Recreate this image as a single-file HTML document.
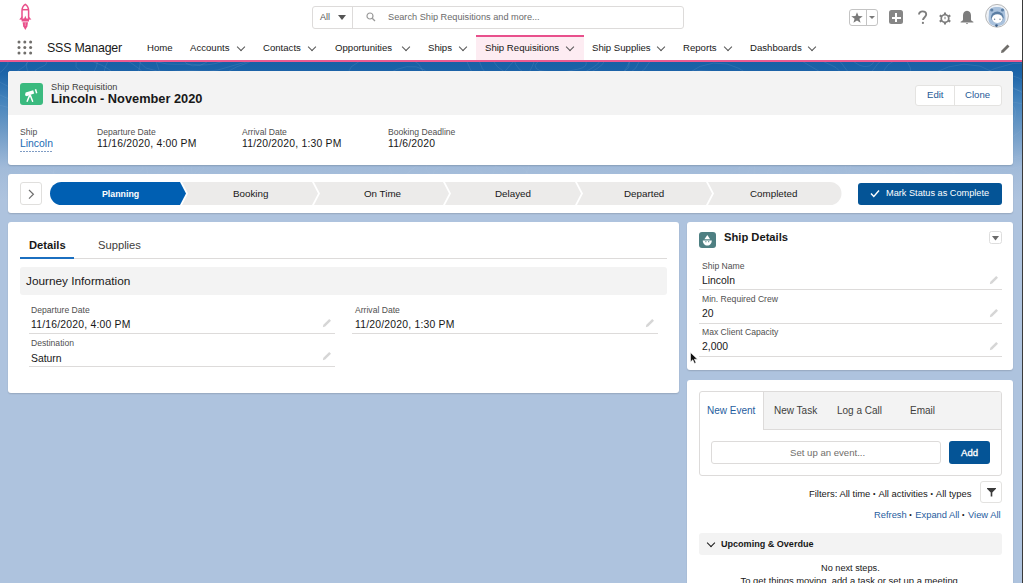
<!DOCTYPE html>
<html><head><meta charset="utf-8">
<style>
*{box-sizing:border-box;margin:0;padding:0}
html,body{width:1023px;height:583px;overflow:hidden}
body{font-family:"Liberation Sans",sans-serif;color:#181818;position:relative;
background:linear-gradient(to bottom,#ffffff 0,#ffffff 60px,#1960a5 62px,#1d64a8 74px,#4483bc 100px,#6d9ac6 130px,#a2bbd9 168px,#aec3de 200px,#aec3de 583px);}
.a{position:absolute;white-space:nowrap}
.card{position:absolute;background:#fff;border-radius:3px;box-shadow:0 1px 1.5px rgba(0,0,0,.14)}
.nav{font-size:9.6px;color:#181818;top:42px}
.chev{position:absolute;width:6px;height:6px;border-right:1px solid #555;border-bottom:1px solid #555;transform:rotate(45deg)}
.lbl{font-size:8.6px;color:#505050}
.val{font-size:10.4px;color:#181818}
.dt{letter-spacing:0.2px}
.uline{position:absolute;height:1px;background:#dddbda}
.pen{position:absolute;width:10px;height:10px}
</style></head><body>
<!-- header -->
<svg class="a" style="left:0;top:62px" width="1023" height="160" viewBox="0 62 1023 160"><defs><linearGradient id="fg" x1="0" y1="0" x2="0" y2="1"><stop offset="0" stop-color="#fff" stop-opacity="1"/><stop offset="1" stop-color="#fff" stop-opacity="0"/></linearGradient><mask id="fm"><rect x="0" y="62" width="1023" height="160" fill="url(#fg)"/></mask></defs><g mask="url(#fm)" fill="none" stroke="#ffffff" stroke-opacity="0.13" stroke-width="0.7"><path d="M79.7 70.0 L82.9 72.5 L84.7 75.5 L83.8 78.5 L80.3 80.5 L75.5 81.4 L70.8 81.5 L66.8 81.6 L63.4 81.8 L60.0 82.1 L56.5 82.1 L53.2 81.5 L49.9 80.7 L46.4 80.0 L42.2 79.2 L37.8 77.9 L34.4 75.7 L33.5 72.9 L35.5 70.0 L39.4 67.8 L43.2 66.2 L45.5 64.9 L46.5 63.0 L47.1 60.6 L48.7 58.0 L51.7 56.0 L55.7 55.1 L60.0 54.9 L64.2 55.3 L68.3 56.0 L72.0 57.2 L74.8 59.1 L76.1 61.7 L76.1 64.3 L76.0 66.4 L77.1 68.1 L79.7 70.0Z"/><path d="M94.9 70.0 L93.0 73.6 L90.7 76.9 L87.4 79.7 L83.0 81.9 L78.3 83.4 L74.1 85.0 L70.4 87.5 L66.0 90.9 L60.0 94.2 L52.7 95.6 L45.7 94.2 L40.9 90.4 L38.7 85.6 L37.9 81.4 L36.6 78.3 L33.7 75.9 L30.1 73.2 L27.3 70.0 L26.4 66.4 L27.1 62.6 L28.8 58.9 L31.2 55.1 L34.8 51.5 L40.3 49.0 L47.2 48.4 L54.3 49.9 L60.0 52.6 L64.4 54.6 L68.8 55.1 L74.7 54.4 L82.2 53.7 L89.7 54.7 L95.1 57.5 L97.2 61.7 L96.7 66.0 L94.9 70.0Z"/><path d="M110.0 70.0 L114.3 75.9 L112.7 81.8 L105.9 86.3 L96.8 89.0 L88.1 90.6 L80.8 92.1 L74.0 93.7 L67.1 94.9 L60.0 95.0 L53.0 94.4 L45.9 93.8 L37.8 93.6 L28.2 93.3 L18.3 91.5 L11.0 87.4 L8.9 81.4 L12.5 75.2 L19.0 70.0 L24.7 66.2 L27.2 62.6 L27.1 58.3 L27.1 53.0 L29.6 47.7 L35.3 43.6 L42.9 41.1 L51.3 39.7 L60.0 39.0 L68.8 39.3 L77.1 41.2 L83.3 45.1 L86.7 50.4 L88.0 55.5 L89.8 59.4 L94.4 62.3 L102.1 65.4 L110.0 70.0Z"/><path d="M104.4 70.0 L106.2 75.0 L110.9 81.4 L114.8 89.5 L113.6 97.7 L105.9 103.7 L93.6 105.8 L80.5 104.7 L69.3 102.4 L60.0 100.7 L51.4 100.1 L42.6 99.5 L33.9 97.8 L26.0 94.9 L18.6 91.4 L10.5 87.6 L1.5 83.1 L-6.5 77.2 L-10.0 70.0 L-6.5 62.8 L3.4 57.3 L15.7 54.3 L26.0 52.4 L32.4 49.7 L36.4 44.8 L41.4 38.6 L49.4 33.1 L60.0 30.3 L71.3 30.7 L81.7 33.3 L91.1 36.8 L99.6 41.0 L106.2 46.1 L109.6 52.4 L109.0 59.0 L106.1 65.0 L104.4 70.0Z"/><path d="M140.9 70.0 L143.6 79.1 L137.5 87.4 L125.7 93.3 L112.7 97.2 L101.4 100.3 L91.4 103.4 L81.4 106.1 L70.7 107.4 L60.0 107.3 L49.4 106.9 L38.0 107.2 L24.3 108.1 L8.7 107.6 L-5.4 103.8 L-13.3 96.0 L-12.6 86.3 L-5.4 77.1 L3.1 70.0 L7.9 64.3 L8.0 58.3 L6.3 50.9 L7.2 42.7 L12.8 35.4 L22.5 30.0 L34.2 26.4 L46.8 23.9 L60.0 22.5 L73.4 23.4 L85.1 27.5 L93.2 34.6 L97.3 42.7 L100.2 49.3 L106.0 53.6 L116.8 57.3 L130.3 62.4 L140.9 70.0Z"/><path d="M139.0 70.0 L133.0 77.9 L124.2 84.4 L116.1 89.9 L111.3 96.5 L108.6 105.6 L103.9 116.7 L93.5 126.7 L77.6 131.5 L60.0 129.4 L45.1 122.0 L34.5 113.2 L26.1 106.1 L17.0 101.5 L6.2 97.8 L-4.5 92.9 L-12.8 86.3 L-18.3 78.5 L-22.2 70.0 L-25.7 60.7 L-27.2 50.5 L-23.5 40.3 L-12.2 32.7 L4.9 29.6 L23.3 30.8 L38.4 33.5 L49.6 33.8 L60.0 30.2 L73.1 24.3 L89.6 19.9 L106.7 20.2 L120.6 25.5 L129.7 34.0 L135.1 43.3 L138.7 52.4 L140.5 61.3 L139.0 70.0Z"/><path d="M223.8 40.0 L226.2 42.8 L225.7 45.8 L222.6 48.0 L218.2 49.4 L213.8 50.1 L210.1 50.8 L206.8 51.5 L203.5 52.1 L200.0 52.2 L196.6 51.9 L193.2 51.5 L189.4 51.3 L184.8 51.1 L180.0 50.3 L176.2 48.4 L174.9 45.6 L176.4 42.6 L179.6 40.0 L182.6 38.1 L184.1 36.4 L184.3 34.4 L184.3 31.9 L185.4 29.3 L188.0 27.2 L191.7 25.9 L195.8 25.3 L200.0 25.0 L204.3 25.1 L208.3 26.0 L211.5 27.8 L213.2 30.3 L213.8 32.9 L214.5 34.8 L216.5 36.3 L220.0 37.8 L223.8 40.0Z"/><path d="M234.3 40.0 L232.8 43.6 L230.4 46.8 L226.7 49.5 L222.2 51.5 L217.9 53.1 L214.4 55.3 L211.0 58.6 L206.4 62.4 L200.0 65.3 L192.6 65.8 L186.2 63.4 L182.1 59.0 L180.2 54.5 L178.8 51.0 L176.3 48.4 L172.6 46.1 L168.9 43.4 L166.7 40.0 L166.2 36.3 L166.9 32.6 L168.2 28.7 L170.4 24.7 L174.5 21.3 L180.6 19.3 L187.9 19.5 L194.7 21.5 L200.0 23.7 L204.3 24.8 L209.3 24.3 L215.9 23.0 L223.7 22.6 L230.6 24.2 L234.8 27.6 L236.1 31.9 L235.5 36.1 L234.3 40.0Z"/><path d="M251.8 40.0 L255.0 46.0 L252.1 51.7 L244.7 55.9 L235.8 58.5 L227.7 60.3 L220.7 62.1 L214.1 63.8 L207.1 64.8 L200.0 64.9 L193.0 64.3 L185.8 64.1 L177.2 64.3 L167.2 64.0 L157.5 62.0 L151.1 57.4 L150.2 51.1 L154.5 44.9 L160.8 40.0 L165.3 36.2 L166.6 32.5 L165.9 27.9 L166.1 22.5 L169.2 17.4 L175.2 13.6 L182.9 11.2 L191.3 9.7 L200.0 8.9 L208.8 9.2 L216.9 11.5 L222.7 15.8 L225.7 21.1 L227.2 26.0 L229.9 29.4 L235.7 32.0 L244.1 35.2 L251.8 40.0Z"/><path d="M266.9 40.0 L269.4 47.5 L264.5 54.4 L254.8 59.5 L243.9 62.7 L234.4 65.2 L226.0 67.7 L217.7 70.0 L208.9 71.1 L200.0 71.0 L191.2 70.6 L181.8 70.8 L170.5 71.5 L157.6 71.1 L145.8 68.0 L139.0 61.7 L139.4 53.6 L145.3 45.9 L152.5 40.0 L156.7 35.3 L157.0 30.4 L155.7 24.3 L156.3 17.4 L160.9 11.3 L168.8 6.8 L178.6 3.8 L189.0 1.8 L200.0 0.6 L211.1 1.3 L220.9 4.6 L227.7 10.5 L231.1 17.2 L233.4 22.7 L238.1 26.5 L246.9 29.5 L258.0 33.7 L266.9 40.0Z"/><path d="M270.1 40.0 L266.8 47.3 L262.1 53.9 L254.9 59.5 L245.7 63.6 L236.6 66.9 L229.1 71.0 L222.1 77.3 L212.9 85.0 L200.0 91.2 L184.9 92.6 L171.5 88.1 L163.0 79.5 L159.0 70.1 L156.4 62.5 L151.9 57.1 L144.7 52.4 L137.2 46.8 L132.3 40.0 L131.1 32.5 L132.6 24.9 L135.5 17.1 L140.1 9.1 L148.1 1.9 L160.2 -2.4 L174.9 -2.4 L189.0 1.5 L200.0 6.4 L208.9 9.1 L218.7 8.4 L231.9 6.0 L247.6 5.1 L262.0 8.0 L271.2 14.7 L274.2 23.4 L272.9 32.1 L270.1 40.0Z"/><path d="M409.7 95.0 L412.9 97.5 L414.7 100.5 L413.8 103.5 L410.3 105.5 L405.5 106.4 L400.8 106.5 L396.9 106.6 L393.4 106.8 L390.0 107.1 L386.5 107.1 L383.2 106.5 L379.9 105.7 L376.4 105.0 L372.2 104.2 L367.8 102.9 L364.5 100.7 L363.5 97.9 L365.5 95.0 L369.3 92.8 L373.1 91.2 L375.5 89.9 L376.5 88.0 L377.1 85.6 L378.7 83.0 L381.7 81.0 L385.7 80.1 L390.0 79.9 L394.2 80.3 L398.3 81.0 L402.0 82.2 L404.8 84.1 L406.1 86.7 L406.1 89.3 L406.0 91.4 L407.1 93.1 L409.7 95.0Z"/><path d="M422.1 95.0 L419.0 98.1 L415.7 100.8 L413.6 103.4 L412.9 106.8 L412.4 111.4 L409.9 116.2 L404.5 119.5 L397.2 120.2 L390.0 118.2 L384.3 115.0 L379.9 112.0 L375.9 110.0 L371.4 108.7 L366.6 107.1 L362.4 104.8 L359.3 101.9 L356.8 98.6 L354.5 95.0 L352.4 90.9 L352.2 86.5 L355.0 82.6 L361.2 80.1 L368.9 79.5 L376.1 80.2 L381.4 80.4 L385.5 79.2 L390.0 76.6 L396.0 74.0 L403.1 72.9 L409.7 74.0 L414.8 76.8 L418.4 80.4 L420.9 84.0 L422.8 87.7 L423.4 91.4 L422.1 95.0Z"/><path d="M434.6 95.0 L431.2 99.5 L426.3 103.1 L421.7 106.3 L419.0 110.0 L417.4 115.1 L414.8 121.4 L408.9 127.0 L399.9 129.7 L390.0 128.5 L381.6 124.3 L375.6 119.4 L370.9 115.4 L365.7 112.8 L359.6 110.7 L353.6 107.9 L348.9 104.2 L345.8 99.8 L343.6 95.0 L341.6 89.7 L340.7 84.0 L342.9 78.3 L349.2 74.0 L358.9 72.2 L369.3 72.9 L377.8 74.4 L384.1 74.6 L390.0 72.5 L397.4 69.2 L406.7 66.7 L416.4 66.9 L424.2 69.9 L429.4 74.7 L432.4 79.9 L434.4 85.1 L435.4 90.1 L434.6 95.0Z"/><path d="M454.3 95.0 L458.8 102.5 L455.8 109.7 L446.8 115.2 L435.5 118.5 L425.0 120.7 L416.0 122.8 L407.7 124.9 L399.0 126.2 L390.0 126.3 L381.2 125.6 L372.2 125.1 L361.7 125.2 L349.3 124.9 L336.9 122.4 L328.4 116.9 L326.8 109.2 L331.9 101.3 L339.9 95.0 L346.2 90.2 L348.3 85.7 L347.7 80.0 L347.8 73.2 L351.4 66.7 L358.8 61.8 L368.5 58.7 L379.1 56.9 L390.0 55.9 L401.1 56.3 L411.3 59.0 L418.9 64.2 L422.8 70.9 L424.5 77.2 L427.5 81.7 L434.3 85.1 L444.5 89.1 L454.3 95.0Z"/><path d="M584.4 60.0 L586.4 62.9 L585.6 65.7 L582.3 67.9 L577.9 69.2 L573.6 70.0 L570.1 70.7 L566.8 71.5 L563.5 72.1 L560.0 72.2 L556.6 71.9 L553.2 71.6 L549.2 71.5 L544.5 71.3 L539.7 70.5 L536.2 68.5 L535.2 65.5 L537.0 62.5 L540.2 60.0 L542.9 58.1 L544.0 56.4 L544.0 54.3 L544.0 51.7 L545.2 49.2 L548.0 47.2 L551.7 46.0 L555.8 45.3 L560.0 45.0 L564.3 45.1 L568.3 46.0 L571.3 47.9 L573.0 50.5 L573.6 53.0 L574.5 54.9 L576.8 56.2 L580.5 57.8 L584.4 60.0Z"/><path d="M600.7 60.0 L597.6 64.1 L593.0 67.4 L588.4 70.1 L584.3 72.5 L580.1 74.7 L575.2 76.2 L570.1 77.0 L565.0 77.6 L560.0 78.6 L554.2 80.3 L547.0 81.9 L539.3 82.1 L532.9 79.9 L529.7 75.6 L530.1 70.6 L532.3 66.2 L533.8 62.8 L533.1 60.0 L531.1 56.9 L529.5 53.2 L529.9 49.3 L532.5 45.8 L536.6 42.8 L541.4 40.2 L547.0 37.9 L553.3 36.6 L560.0 37.0 L565.9 39.3 L570.2 42.8 L573.1 46.1 L576.3 48.0 L581.5 48.9 L588.7 49.8 L595.9 52.0 L600.4 55.6 L600.7 60.0Z"/><path d="M605.0 60.0 L602.2 64.6 L597.3 68.4 L592.2 71.4 L588.4 74.7 L586.2 79.2 L583.6 85.1 L578.4 91.0 L569.9 94.6 L560.0 94.4 L551.2 90.7 L544.9 85.5 L540.5 80.8 L536.0 77.6 L530.3 75.3 L524.3 72.7 L519.2 69.1 L516.0 64.8 L514.0 60.0 L512.6 54.9 L511.8 49.2 L513.4 43.4 L518.7 38.7 L527.7 36.3 L538.1 36.6 L547.2 38.4 L554.1 39.5 L560.0 38.4 L567.0 35.6 L576.1 32.9 L586.0 32.3 L594.4 34.7 L600.1 39.3 L603.1 44.7 L604.7 50.0 L605.6 55.1 L605.0 60.0Z"/><path d="M629.4 60.0 L628.8 67.5 L621.8 73.8 L611.9 78.4 L602.3 81.8 L594.0 84.9 L586.1 87.8 L577.7 89.9 L568.8 90.7 L560.0 90.7 L551.1 91.1 L540.9 92.4 L528.5 93.6 L515.5 92.7 L505.3 88.3 L501.3 80.9 L503.9 72.6 L510.0 65.4 L515.0 60.0 L516.1 55.2 L514.3 49.8 L512.8 43.2 L514.7 36.6 L520.5 31.0 L528.9 26.9 L538.6 23.7 L548.9 21.3 L560.0 20.3 L571.0 21.7 L580.0 26.2 L585.7 32.6 L589.0 38.7 L592.9 43.0 L600.3 45.7 L611.4 48.5 L622.7 53.2 L629.4 60.0Z"/><path d="M630.3 60.0 L626.9 67.3 L622.2 73.9 L615.1 79.6 L605.9 83.7 L596.7 86.9 L589.0 90.9 L581.9 97.0 L572.8 104.6 L560.0 110.8 L544.9 112.6 L531.4 108.4 L522.6 99.9 L518.6 90.4 L516.2 82.6 L512.0 77.1 L505.0 72.3 L497.5 66.8 L492.5 60.0 L491.2 52.5 L492.7 44.9 L495.7 37.2 L500.3 29.2 L508.2 22.0 L520.1 17.5 L534.7 17.3 L548.8 21.0 L560.0 26.0 L568.9 29.1 L578.5 28.7 L591.5 26.4 L607.2 25.4 L621.8 28.1 L631.3 34.7 L634.5 43.3 L633.2 52.1 L630.3 60.0Z"/><path d="M640.1 60.0 L635.6 68.2 L627.3 75.1 L617.7 80.5 L610.1 85.9 L605.2 93.2 L600.5 103.1 L591.8 113.7 L577.5 121.0 L560.0 121.7 L544.0 115.9 L532.5 106.5 L524.7 97.6 L517.4 91.2 L508.2 86.8 L497.6 82.2 L488.3 76.1 L482.2 68.4 L478.9 60.0 L476.8 51.0 L475.8 41.1 L478.1 30.9 L486.6 22.1 L501.6 17.2 L519.9 17.2 L536.6 20.5 L549.5 23.3 L560.0 22.5 L572.0 18.2 L587.6 13.3 L605.3 11.7 L621.1 15.2 L631.7 23.0 L637.2 32.6 L639.7 42.1 L640.9 51.2 L640.1 60.0Z"/><path d="M650.9 60.0 L644.6 69.2 L634.6 76.7 L624.7 83.0 L618.1 90.0 L614.4 99.9 L609.1 112.4 L597.9 124.1 L580.2 130.4 L560.0 128.9 L542.6 120.8 L530.2 110.4 L520.9 101.7 L511.0 95.9 L499.1 91.5 L486.7 86.0 L476.9 78.6 L470.5 69.7 L466.3 60.0 L462.8 49.4 L461.1 37.8 L464.8 26.2 L476.7 17.0 L495.7 12.9 L516.8 14.0 L534.8 17.3 L548.1 18.6 L560.0 15.3 L574.6 8.9 L593.3 3.7 L613.2 3.3 L629.7 8.9 L640.5 18.4 L646.6 29.2 L650.3 39.8 L652.3 50.0 L650.9 60.0Z"/><path d="M726.2 110.0 L726.8 112.9 L724.6 115.5 L720.8 117.4 L716.8 118.7 L713.2 119.7 L710.1 120.7 L706.8 121.6 L703.4 122.0 L700.0 121.9 L696.6 121.9 L692.9 122.0 L688.4 122.4 L683.4 122.2 L678.9 120.9 L676.6 118.3 L677.1 115.1 L679.4 112.2 L682.0 110.0 L683.3 108.2 L683.1 106.2 L682.5 103.8 L682.9 101.2 L684.8 98.9 L688.0 97.2 L691.7 96.0 L695.8 95.2 L700.0 94.7 L704.3 95.1 L708.0 96.5 L710.5 98.8 L711.8 101.4 L712.8 103.4 L714.9 104.7 L718.6 105.8 L723.0 107.5 L726.2 110.0Z"/><path d="M733.3 110.0 L731.0 113.4 L727.3 116.1 L723.7 118.4 L721.3 121.0 L719.9 124.6 L718.0 129.2 L713.9 133.5 L707.4 135.8 L700.0 135.2 L693.6 132.3 L689.1 128.5 L685.7 125.3 L682.1 123.2 L677.7 121.5 L673.2 119.5 L669.6 116.8 L667.2 113.6 L665.7 110.0 L664.4 106.1 L663.8 101.9 L665.1 97.6 L669.5 94.3 L676.5 92.8 L684.2 93.2 L690.8 94.4 L695.7 94.8 L700.0 93.6 L705.4 91.3 L712.2 89.4 L719.5 89.2 L725.5 91.3 L729.5 94.8 L731.7 98.7 L733.1 102.6 L733.8 106.3 L733.3 110.0Z"/><path d="M755.6 110.0 L752.5 115.7 L746.0 120.3 L739.1 123.9 L732.9 127.0 L727.0 129.8 L720.7 132.1 L713.8 133.3 L706.8 133.8 L700.0 134.5 L692.5 136.0 L683.4 138.0 L673.0 138.8 L663.4 136.8 L657.7 131.9 L657.1 125.2 L660.2 118.9 L663.7 113.9 L664.6 110.0 L662.9 106.0 L660.5 101.2 L660.3 95.9 L663.1 91.0 L668.5 86.9 L675.2 83.6 L682.7 80.7 L691.0 78.7 L700.0 78.5 L708.3 80.9 L714.6 85.4 L718.5 90.3 L721.9 93.9 L727.4 95.9 L735.9 97.2 L745.7 99.8 L753.3 104.2 L755.6 110.0Z"/><path d="M767.4 110.0 L769.4 117.5 L764.1 124.4 L754.3 129.3 L743.6 132.5 L734.3 135.2 L726.0 137.8 L717.7 140.0 L708.9 141.1 L700.0 141.0 L691.2 140.6 L681.7 141.0 L670.2 141.8 L657.2 141.4 L645.6 138.1 L639.3 131.6 L640.0 123.4 L646.1 115.8 L653.0 110.0 L656.8 105.3 L656.6 100.3 L655.2 94.1 L656.0 87.3 L660.8 81.2 L668.8 76.8 L678.6 73.8 L689.0 71.7 L700.0 70.6 L711.1 71.3 L720.8 74.8 L727.4 80.8 L730.8 87.4 L733.3 92.8 L738.3 96.4 L747.5 99.4 L758.8 103.6 L767.4 110.0Z"/><path d="M759.4 110.0 L754.1 115.9 L751.7 121.6 L753.1 128.9 L754.9 138.3 L752.4 148.5 L743.2 156.1 L728.8 158.7 L713.2 156.2 L700.0 151.2 L689.5 146.6 L680.1 143.7 L670.1 141.9 L659.9 139.4 L650.7 135.5 L643.1 130.2 L636.1 124.3 L628.6 117.7 L621.6 110.0 L618.3 101.1 L622.3 92.6 L633.7 86.5 L649.3 83.8 L663.9 83.5 L674.3 82.6 L681.7 79.0 L689.3 72.7 L700.0 66.4 L713.5 63.1 L727.2 64.0 L739.0 68.4 L748.4 74.5 L756.2 81.0 L762.4 87.8 L765.6 95.3 L764.3 103.0 L759.4 110.0Z"/><path d="M881.2 50.0 L879.2 52.1 L877.0 53.8 L875.3 55.5 L874.7 57.6 L874.3 60.5 L872.8 63.6 L869.4 66.0 L864.8 66.6 L860.0 65.5 L856.2 63.3 L853.3 61.3 L850.8 59.8 L847.9 58.8 L844.8 57.8 L842.0 56.4 L839.9 54.5 L838.4 52.3 L837.0 50.0 L835.7 47.4 L835.4 44.5 L837.1 41.9 L840.9 40.1 L845.9 39.6 L850.7 40.1 L854.3 40.4 L857.1 39.8 L860.0 38.3 L863.9 36.6 L868.5 35.7 L872.9 36.2 L876.3 38.0 L878.7 40.4 L880.3 42.8 L881.5 45.2 L881.9 47.6 L881.2 50.0Z"/><path d="M893.8 50.0 L892.4 53.5 L889.4 56.6 L885.3 59.0 L881.2 60.9 L878.1 63.3 L875.6 66.7 L872.4 70.9 L867.1 74.6 L860.0 76.2 L852.9 74.8 L847.5 71.2 L844.2 66.9 L841.8 63.3 L838.9 60.9 L834.9 58.9 L830.8 56.5 L827.7 53.5 L826.2 50.0 L825.8 46.3 L825.9 42.4 L826.7 38.2 L829.4 34.2 L834.6 31.4 L841.8 30.6 L849.2 31.8 L855.3 33.7 L860.0 34.6 L864.6 33.9 L870.6 32.1 L878.0 30.9 L885.3 31.5 L890.7 34.2 L893.5 38.1 L894.3 42.3 L894.3 46.3 L893.8 50.0Z"/><path d="M905.3 50.0 L902.9 54.7 L898.3 58.6 L892.9 61.7 L888.3 64.6 L885.2 68.5 L882.4 73.9 L877.7 79.9 L869.8 84.2 L860.0 85.0 L850.8 82.0 L844.2 76.7 L839.9 71.5 L836.0 67.6 L831.0 65.0 L825.0 62.4 L819.7 59.0 L816.1 54.8 L814.3 50.0 L813.3 44.9 L812.8 39.4 L814.0 33.7 L818.5 28.6 L826.7 25.6 L836.9 25.4 L846.6 27.3 L854.0 29.1 L860.0 29.0 L866.6 26.8 L875.3 24.1 L885.4 23.0 L894.4 24.7 L900.7 29.0 L903.9 34.4 L905.2 39.9 L905.7 45.0 L905.3 50.0Z"/><path d="M905.5 50.0 L904.3 54.8 L906.6 60.4 L910.3 67.9 L911.1 76.4 L905.9 83.7 L895.2 87.5 L882.0 87.2 L869.9 84.4 L860.0 81.5 L851.5 79.7 L843.0 78.8 L834.2 77.5 L826.1 74.9 L818.9 71.2 L812.0 67.1 L804.3 62.5 L796.5 56.9 L791.1 50.0 L791.6 42.6 L799.1 36.4 L811.2 32.7 L823.4 31.1 L832.4 29.7 L838.0 26.5 L842.9 21.1 L850.0 15.1 L860.0 11.1 L871.4 10.4 L882.1 12.6 L891.4 16.5 L899.6 21.0 L906.5 26.0 L911.0 31.9 L911.8 38.4 L909.1 44.7 L905.5 50.0Z"/><path d="M1001.6 120.0 L1000.0 122.2 L997.6 123.9 L995.4 125.5 L994.1 127.3 L993.4 129.8 L992.1 132.9 L989.2 135.6 L984.8 136.9 L980.0 136.2 L975.9 134.2 L973.0 131.8 L970.7 129.9 L968.2 128.7 L965.2 127.6 L962.3 126.3 L960.0 124.5 L958.5 122.3 L957.4 120.0 L956.4 117.4 L956.0 114.6 L957.1 111.9 L960.2 109.8 L965.0 109.0 L970.0 109.3 L974.1 110.0 L977.2 110.1 L980.0 109.0 L983.6 107.4 L988.1 106.2 L992.8 106.3 L996.6 107.8 L999.1 110.1 L1000.6 112.7 L1001.6 115.2 L1002.1 117.6 L1001.6 120.0Z"/><path d="M1014.1 120.0 L1012.7 123.5 L1010.2 126.8 L1006.3 129.4 L1001.8 131.3 L997.8 133.1 L994.7 135.6 L991.4 139.3 L986.6 143.2 L980.0 145.8 L972.7 145.6 L966.5 142.7 L962.8 138.3 L960.8 134.0 L959.0 130.9 L955.9 128.6 L952.0 126.3 L948.4 123.4 L946.5 120.0 L946.1 116.3 L946.7 112.5 L947.8 108.6 L950.1 104.5 L954.4 101.2 L960.9 99.6 L968.3 100.2 L974.9 102.2 L980.0 104.2 L984.4 104.7 L989.7 103.7 L996.6 102.3 L1004.3 102.2 L1010.7 104.1 L1014.5 107.8 L1015.5 112.0 L1015.0 116.2 L1014.1 120.0Z"/><path d="M1031.2 120.0 L1026.6 125.1 L1022.0 129.4 L1017.5 133.3 L1012.5 136.8 L1006.4 139.3 L999.6 140.9 L993.1 142.2 L987.0 144.4 L980.0 147.7 L971.1 151.1 L960.8 152.4 L951.5 150.3 L945.9 145.0 L944.6 138.3 L945.6 132.2 L946.0 127.6 L944.0 123.9 L940.2 120.0 L937.0 115.3 L936.5 110.3 L938.7 105.3 L942.8 100.8 L947.9 96.4 L954.1 92.4 L962.0 89.6 L971.2 89.2 L980.0 91.7 L986.9 95.9 L991.9 99.8 L997.0 101.8 L1004.4 102.1 L1014.3 102.3 L1024.5 104.2 L1031.5 108.5 L1033.6 114.2 L1031.2 120.0Z"/><path d="M1024.9 120.0 L1024.8 124.9 L1028.2 130.8 L1032.1 138.5 L1032.2 147.0 L1026.1 153.8 L1014.6 156.9 L1001.4 156.2 L989.6 153.6 L980.0 151.1 L971.5 149.8 L962.8 149.1 L954.1 147.6 L946.0 144.9 L938.8 141.3 L931.5 137.2 L923.3 132.7 L915.3 127.0 L910.5 120.0 L912.1 112.6 L920.7 106.7 L933.0 103.3 L944.6 101.7 L952.5 99.9 L957.4 96.0 L962.3 90.1 L969.8 84.2 L980.0 80.7 L991.3 80.5 L1001.9 82.9 L1011.3 86.7 L1019.6 91.0 L1026.5 96.0 L1030.6 102.0 L1030.8 108.6 L1027.9 114.8 L1024.9 120.0Z"/><path d="M1040.5 120.0 L1034.7 125.9 L1031.4 131.5 L1031.9 138.4 L1033.4 147.6 L1031.5 157.8 L1023.1 165.9 L1009.1 169.2 L993.5 167.2 L980.0 162.1 L969.4 157.0 L960.1 153.6 L950.4 151.6 L940.1 149.2 L930.8 145.4 L923.2 140.2 L916.5 134.2 L909.5 127.7 L902.7 120.0 L899.0 111.2 L901.9 102.5 L912.5 96.0 L927.9 93.1 L942.9 92.8 L954.2 92.5 L962.0 89.5 L969.6 83.7 L980.0 77.3 L993.3 73.5 L1007.2 74.0 L1019.3 78.2 L1028.7 84.3 L1036.4 90.9 L1042.5 97.8 L1046.0 105.2 L1045.2 112.9 L1040.5 120.0Z"/><path d="M1075.6 120.0 L1067.5 129.5 L1057.0 137.2 L1047.1 143.8 L1037.9 149.9 L1027.7 155.0 L1016.0 158.3 L1003.7 160.1 L992.0 161.9 L980.0 165.3 L965.6 170.2 L948.0 174.1 L929.8 173.5 L916.0 167.0 L910.3 156.0 L912.1 144.1 L916.5 134.2 L917.9 126.7 L914.4 120.0 L908.7 112.3 L905.5 103.3 L907.5 94.2 L914.4 86.1 L924.1 79.0 L935.4 72.4 L948.6 66.9 L964.0 64.2 L980.0 66.1 L993.6 72.5 L1003.1 80.9 L1010.4 87.6 L1019.6 91.0 L1033.8 92.2 L1051.7 94.5 L1068.0 100.3 L1076.6 109.5 L1075.6 120.0Z"/><path d="M1070.8 120.0 L1064.3 129.1 L1054.3 136.6 L1044.5 142.9 L1038.3 150.1 L1034.7 160.2 L1029.5 172.7 L1018.1 184.3 L1000.2 190.5 L980.0 188.6 L962.7 180.4 L950.4 170.1 L941.0 161.6 L931.0 156.0 L918.9 151.6 L906.6 146.1 L896.8 138.6 L890.5 129.7 L886.2 120.0 L882.5 109.4 L880.8 97.8 L884.7 86.1 L896.9 77.1 L916.1 73.1 L937.2 74.3 L954.9 77.6 L968.1 78.6 L980.0 75.0 L994.7 68.6 L1013.5 63.4 L1033.3 63.2 L1049.6 68.9 L1060.3 78.5 L1066.4 89.3 L1070.3 99.8 L1072.3 110.0 L1070.8 120.0Z"/><path d="M137.5 160.0 L139.6 162.1 L142.0 164.9 L142.9 168.1 L141.1 170.9 L137.1 172.5 L132.0 172.8 L127.3 172.4 L123.4 172.0 L120.0 171.9 L116.6 171.9 L113.2 171.6 L109.9 170.8 L106.8 169.6 L103.6 168.5 L99.8 167.2 L95.9 165.4 L93.3 162.9 L93.3 160.0 L96.1 157.4 L100.5 155.6 L104.6 154.5 L107.3 153.4 L108.7 151.7 L109.9 149.3 L112.2 146.8 L115.7 145.2 L120.0 144.7 L124.3 145.1 L128.3 146.0 L132.0 147.2 L135.3 148.8 L137.4 151.0 L138.0 153.6 L137.5 156.1 L136.9 158.2 L137.5 160.0Z"/><path d="M148.5 160.0 L146.2 162.8 L145.7 165.8 L146.9 169.6 L147.9 174.4 L146.3 179.3 L141.2 182.6 L133.9 183.5 L126.3 182.0 L120.0 179.7 L114.9 177.7 L110.2 176.6 L105.2 175.8 L100.2 174.6 L95.8 172.5 L92.0 169.9 L88.4 167.1 L84.4 163.9 L80.9 160.0 L79.7 155.6 L82.2 151.5 L88.4 148.8 L96.1 147.6 L102.8 147.4 L107.4 146.6 L110.8 144.4 L114.6 141.1 L120.0 138.1 L126.7 136.8 L133.3 137.5 L139.0 139.8 L143.6 142.7 L147.5 145.8 L150.6 149.1 L151.9 152.9 L150.9 156.6 L148.5 160.0Z"/><path d="M171.8 160.0 L167.2 165.1 L162.2 169.5 L157.6 173.4 L152.6 176.8 L146.5 179.4 L139.8 181.1 L133.2 182.3 L126.9 184.1 L120.0 187.2 L111.3 190.5 L101.0 192.1 L91.5 190.4 L85.4 185.4 L83.7 178.7 L84.9 172.5 L85.8 167.7 L84.3 163.9 L80.8 160.0 L77.5 155.4 L76.7 150.3 L78.8 145.4 L82.9 140.8 L88.0 136.5 L94.3 132.6 L102.0 129.6 L111.1 129.0 L120.0 131.2 L127.1 135.4 L132.1 139.5 L137.0 141.9 L143.8 142.5 L153.4 142.7 L163.7 144.5 L171.3 148.5 L173.9 154.1 L171.8 160.0Z"/><path d="M174.7 160.0 L182.8 166.8 L185.7 174.7 L181.2 181.7 L170.8 186.2 L158.4 188.1 L147.0 188.8 L137.6 189.7 L128.9 190.9 L120.0 191.6 L111.1 191.2 L102.4 189.7 L93.7 188.0 L83.6 186.7 L71.9 184.8 L60.6 181.1 L53.4 174.9 L53.5 167.2 L60.3 160.0 L70.2 154.6 L78.2 150.6 L82.1 146.5 L83.1 141.0 L84.8 134.2 L89.8 127.9 L98.4 123.5 L109.0 121.6 L120.0 121.2 L130.9 121.8 L141.6 123.5 L150.9 127.1 L157.1 132.8 L159.5 139.6 L159.6 145.9 L160.9 150.8 L166.1 155.0 L174.7 160.0Z"/><path d="M202.8 160.0 L203.3 169.0 L195.7 176.9 L183.7 182.6 L171.6 186.6 L161.1 190.1 L151.4 193.5 L141.3 196.1 L130.6 197.2 L120.0 197.1 L109.4 197.1 L97.4 198.2 L82.9 199.5 L67.2 198.7 L54.1 194.0 L48.1 185.6 L50.4 175.6 L57.9 166.7 L65.0 160.0 L67.6 154.3 L66.2 147.9 L64.3 140.2 L66.0 132.1 L72.5 125.2 L82.5 120.1 L94.2 116.4 L106.7 113.6 L120.0 112.3 L133.3 113.6 L144.5 118.5 L151.8 126.1 L155.8 133.8 L159.7 139.5 L167.4 143.2 L179.9 146.6 L193.6 152.0 L202.8 160.0Z"/><path d="M202.2 160.0 L198.3 168.5 L192.8 176.3 L184.5 182.9 L173.7 187.8 L163.0 191.5 L153.9 196.1 L145.5 203.2 L134.9 212.0 L120.0 219.4 L102.4 221.5 L86.5 216.7 L76.2 206.7 L71.5 195.6 L68.7 186.5 L63.8 180.0 L55.7 174.4 L46.9 167.9 L41.0 160.0 L39.5 151.3 L41.3 142.4 L44.9 133.3 L50.3 124.0 L59.4 115.5 L73.3 110.2 L90.4 110.0 L106.9 114.3 L120.0 120.2 L130.4 123.8 L141.6 123.4 L156.8 120.8 L175.1 119.6 L192.2 122.7 L203.4 130.4 L207.2 140.5 L205.7 150.7 L202.2 160.0Z"/><path d="M195.1 160.0 L191.1 167.7 L192.8 176.3 L197.8 187.7 L199.9 201.3 L193.4 213.8 L177.5 221.3 L156.6 221.9 L136.5 217.4 L120.0 211.8 L106.3 208.0 L92.8 206.0 L78.8 203.9 L65.4 200.1 L53.7 194.2 L43.1 187.3 L31.8 179.8 L19.8 170.9 L10.5 160.0 L9.3 148.0 L19.3 137.5 L38.0 130.9 L58.5 128.2 L74.7 126.8 L85.2 122.9 L93.5 115.1 L104.4 105.6 L120.0 98.2 L138.3 96.1 L156.0 99.2 L171.1 105.5 L184.0 113.0 L195.1 121.2 L203.0 130.5 L205.3 140.9 L201.5 151.2 L195.1 160.0Z"/><path d="M479.1 170.0 L482.2 172.4 L484.3 175.4 L483.8 178.4 L480.6 180.6 L475.9 181.6 L471.0 181.8 L466.9 181.7 L463.4 181.8 L460.0 182.1 L456.5 182.1 L453.2 181.5 L449.9 180.7 L446.5 179.9 L442.5 179.0 L438.2 177.7 L434.6 175.7 L433.3 172.9 L434.9 170.0 L438.7 167.7 L442.7 166.1 L445.5 164.8 L446.7 163.2 L447.4 160.8 L448.9 158.2 L451.8 156.1 L455.7 155.0 L460.0 154.9 L464.2 155.3 L468.3 156.0 L472.0 157.2 L474.9 159.0 L476.4 161.5 L476.5 164.1 L476.2 166.4 L476.9 168.2 L479.1 170.0Z"/><path d="M494.4 170.0 L492.8 173.6 L490.5 176.8 L487.0 179.6 L482.5 181.6 L478.0 183.2 L474.2 185.2 L470.8 188.2 L466.3 192.0 L460.0 195.0 L452.6 195.8 L446.0 193.7 L441.7 189.5 L439.8 184.8 L438.6 181.1 L436.4 178.4 L432.9 176.1 L429.3 173.3 L426.8 170.0 L426.2 166.3 L427.0 162.6 L428.4 158.8 L430.7 154.9 L434.5 151.3 L440.4 149.2 L447.7 149.1 L454.6 151.0 L460.0 153.4 L464.3 154.8 L469.1 154.6 L475.5 153.4 L483.2 153.0 L490.4 154.3 L495.0 157.6 L496.5 161.8 L495.8 166.1 L494.4 170.0Z"/><path d="M501.8 170.0 L508.4 175.3 L511.6 181.5 L509.0 187.4 L501.3 191.3 L491.3 193.0 L481.9 193.4 L474.0 193.7 L467.0 194.5 L460.0 195.1 L452.9 194.8 L446.0 193.7 L439.2 192.2 L431.6 190.8 L422.7 189.3 L413.6 186.5 L407.1 181.8 L406.1 175.8 L410.8 170.0 L418.8 165.5 L426.1 162.4 L430.1 159.4 L431.5 155.3 L432.8 150.1 L436.4 144.9 L442.9 141.1 L451.2 139.3 L460.0 139.1 L468.7 139.7 L477.1 141.0 L484.7 143.7 L490.1 147.9 L492.4 153.3 L492.4 158.5 L492.7 162.7 L495.7 166.1 L501.8 170.0Z"/><path d="M525.8 170.0 L529.3 177.5 L525.2 184.6 L515.7 189.8 L504.6 193.0 L494.6 195.4 L486.0 197.7 L477.7 199.9 L468.9 201.2 L460.0 201.2 L451.2 200.6 L442.0 200.4 L431.0 200.9 L418.3 200.6 L406.2 197.8 L398.6 191.8 L398.1 183.9 L403.8 176.1 L411.4 170.0 L416.6 165.3 L417.7 160.5 L416.6 154.6 L417.0 147.8 L421.1 141.5 L428.8 136.8 L438.6 133.8 L449.1 131.9 L460.0 130.8 L471.1 131.3 L481.1 134.3 L488.2 139.9 L491.9 146.6 L493.9 152.5 L497.7 156.6 L505.6 159.8 L516.4 163.9 L525.8 170.0Z"/><path d="M528.2 170.0 L523.8 176.9 L516.5 182.6 L508.7 187.3 L503.1 192.2 L499.7 199.1 L495.8 208.1 L487.8 217.1 L475.0 222.5 L460.0 222.1 L446.7 216.4 L437.2 208.5 L430.5 201.5 L423.6 196.7 L415.0 193.2 L405.8 189.2 L398.2 183.8 L393.3 177.2 L390.4 170.0 L388.1 162.2 L387.0 153.6 L389.3 144.9 L397.5 137.7 L411.1 134.2 L426.9 134.7 L440.7 137.4 L451.1 139.0 L460.0 137.3 L470.6 132.9 L484.4 128.8 L499.4 128.1 L512.2 131.8 L520.6 138.7 L525.2 146.8 L527.7 154.8 L529.0 162.5 L528.2 170.0Z"/><path d="M823.9 180.0 L822.0 182.4 L820.2 184.5 L818.2 186.5 L815.6 188.0 L812.5 189.1 L809.3 189.9 L806.4 190.9 L803.6 192.5 L800.0 194.4 L795.4 196.0 L790.5 196.1 L786.5 194.3 L784.5 191.4 L784.2 188.2 L784.2 185.6 L783.5 183.7 L781.7 182.0 L779.7 180.0 L778.5 177.7 L778.6 175.2 L779.9 172.9 L781.7 170.6 L784.0 168.3 L787.2 166.4 L791.3 165.3 L795.9 165.7 L800.0 167.2 L803.1 169.2 L805.6 170.5 L808.6 170.8 L812.9 170.5 L818.0 170.7 L822.5 172.0 L825.0 174.4 L825.2 177.3 L823.9 180.0Z"/><path d="M836.2 180.0 L833.5 183.6 L830.8 186.9 L827.7 189.9 L823.7 192.2 L818.9 193.9 L814.2 195.1 L809.9 196.7 L805.5 199.4 L800.0 202.5 L792.9 204.7 L785.5 204.6 L779.6 201.7 L776.7 197.1 L776.2 192.3 L776.1 188.5 L774.7 185.7 L771.7 183.1 L768.6 180.0 L766.9 176.4 L767.3 172.7 L769.2 169.1 L771.9 165.5 L775.5 162.0 L780.4 159.1 L786.8 157.6 L793.8 158.4 L800.0 160.9 L804.7 163.8 L808.6 165.5 L813.4 165.7 L820.2 165.2 L828.0 165.5 L834.7 167.7 L838.2 171.4 L838.2 175.8 L836.2 180.0Z"/><path d="M845.5 180.0 L843.6 184.7 L839.6 188.9 L834.0 192.1 L828.5 194.7 L824.4 197.9 L821.0 202.4 L816.6 208.1 L809.5 213.2 L800.0 215.3 L790.4 213.4 L783.1 208.5 L778.7 202.7 L775.5 198.0 L771.6 194.7 L766.2 192.0 L760.7 188.8 L756.5 184.7 L754.5 180.0 L754.0 175.0 L754.1 169.7 L755.2 164.1 L758.8 158.7 L765.9 155.0 L775.5 153.9 L785.5 155.5 L793.7 158.0 L800.0 159.3 L806.2 158.3 L814.3 155.9 L824.2 154.2 L834.0 155.1 L841.3 158.7 L845.0 164.0 L846.2 169.7 L846.2 175.0 L845.5 180.0Z"/><path d="M844.8 180.0 L844.9 184.9 L848.4 190.8 L852.3 198.6 L852.4 207.0 L846.1 213.8 L834.6 216.8 L821.4 216.1 L809.6 213.4 L800.0 211.0 L791.5 209.8 L782.8 209.1 L774.0 207.7 L766.0 204.9 L758.8 201.3 L751.4 197.3 L743.1 192.7 L735.1 187.0 L730.4 180.0 L732.2 172.6 L740.9 166.8 L753.3 163.4 L764.7 161.8 L772.5 159.9 L777.4 155.9 L782.2 149.9 L789.7 144.1 L800.0 140.6 L811.3 140.5 L821.9 142.9 L831.2 146.7 L839.6 151.0 L846.4 156.0 L850.5 162.1 L850.6 168.7 L847.7 174.8 L844.8 180.0Z"/><path d="M878.3 180.0 L883.2 189.0 L879.0 197.7 L867.8 204.1 L854.3 208.0 L841.9 210.8 L831.4 213.4 L821.3 216.0 L810.8 217.6 L800.0 217.7 L789.4 216.9 L778.4 216.4 L765.6 216.7 L750.4 216.3 L735.7 213.2 L725.9 206.3 L724.5 196.9 L731.0 187.5 L740.5 180.0 L747.5 174.3 L749.5 168.7 L748.5 161.7 L748.7 153.5 L753.4 145.8 L762.5 140.0 L774.2 136.3 L786.8 134.1 L800.0 132.9 L813.4 133.4 L825.6 136.8 L834.5 143.3 L839.0 151.4 L841.2 158.7 L845.2 163.9 L854.0 167.9 L866.7 172.8 L878.3 180.0Z"/><path d="M894.6 180.0 L897.8 190.6 L890.7 200.3 L876.9 207.3 L861.7 211.9 L848.4 215.5 L836.7 219.1 L825.0 222.2 L812.6 223.8 L800.0 223.7 L787.6 223.2 L774.3 223.5 L758.2 224.5 L740.0 224.0 L723.5 219.5 L714.2 210.5 L714.9 199.1 L723.4 188.3 L733.4 180.0 L739.1 173.4 L739.2 166.4 L737.3 157.7 L738.3 148.1 L744.8 139.5 L756.1 133.2 L769.8 129.0 L784.6 126.1 L800.0 124.5 L815.6 125.5 L829.4 130.3 L838.8 138.6 L843.6 148.0 L847.0 155.7 L853.8 160.9 L866.4 165.1 L882.2 171.1 L894.6 180.0Z"/></g></svg>

<div class="a" style="left:0;top:60px;width:1023px;height:2px;background:#ec5a90"></div>

<!-- rocket -->
<svg class="a" style="left:14px;top:2px" width="24" height="30" viewBox="0 0 24 30">
<path d="M8 16.5 L8 8.8 C8 5.6 9.4 3.6 11.3 2.4 C13.2 3.6 14.6 5.6 14.6 8.8 L14.6 16.5" fill="none" stroke="#e94f8a" stroke-width="1.5"/>
<path d="M8 7.7 L14.6 7.7" stroke="#e94f8a" stroke-width="1.5"/>
<path d="M5.2 17.4 L8.3 14 L8.3 17.8 Z M17.4 17.4 L14.3 14 L14.3 17.8 Z" fill="#e94f8a"/>
<path d="M7.6 16.4 L10.2 16.4 L11.3 13.8 L12.4 16.4 L15 16.4 L15 19.6 L7.6 19.6 Z" fill="#e94f8a"/>
<path d="M8.6 20.3 L14 20.3 L13.4 24.2 L11.3 28 L9.2 24.2 Z" fill="#e94f8a"/>
<path d="M11.3 20.5 L11.3 24" stroke="#f7b9d0" stroke-width=".6"/>
</svg>

<!-- search -->
<div class="a" style="left:312px;top:6px;width:372px;height:23px;border:1px solid #dddbda;border-radius:3px;background:#fff"></div>
<div class="a" style="left:352px;top:7px;width:1px;height:21px;background:#dddbda"></div>
<div class="a" style="left:320px;top:12px;font-size:9px;color:#555">All</div>
<svg class="a" style="left:338px;top:15px" width="8" height="5"><path d="M0 0 L8 0 L4 5Z" fill="#555"/></svg>
<svg class="a" style="left:366px;top:12px" width="10" height="10" viewBox="0 0 10 10"><circle cx="4" cy="4" r="3" fill="none" stroke="#999" stroke-width="1.2"/><path d="M6.2 6.2 L9 9" stroke="#999" stroke-width="1.3"/></svg>
<div class="a" style="left:388px;top:12px;font-size:9.2px;color:#6b6b6b">Search Ship Requisitions and more...</div>

<!-- right icons -->
<div class="a" style="left:849px;top:9px;width:29px;height:17px;border:1px solid #c4c4c4;border-radius:3px"></div>
<div class="a" style="left:866px;top:10px;width:1px;height:15px;background:#c4c4c4"></div>
<svg class="a" style="left:851px;top:12px" width="12" height="11" viewBox="0 0 24 22"><path d="M12 0.5 L15 8 L23.5 8.3 L16.8 13.5 L19.2 21.5 L12 16.8 L4.8 21.5 L7.2 13.5 L0.5 8.3 L9 8 Z" fill="#7a7a7a"/></svg>
<svg class="a" style="left:869px;top:16px" width="6" height="3"><path d="M0 0 L6 0 L3 3Z" fill="#7a7a7a"/></svg>
<div class="a" style="left:889px;top:10px;width:14px;height:14px;background:#868686;border-radius:2.5px"></div>
<div class="a" style="left:895px;top:12.5px;width:2px;height:9px;background:#fff"></div>
<div class="a" style="left:891.5px;top:16.5px;width:9px;height:2px;background:#fff"></div>
<svg class="a" style="left:916px;top:10px" width="13" height="15" viewBox="0 0 13 15"><path d="M3 4.5 C3 2.4 4.6 1.4 6.5 1.4 C8.6 1.4 10.2 2.6 10.2 4.6 C10.2 7 7 7.4 7 10" fill="none" stroke="#7d7d7d" stroke-width="1.9"/><circle cx="6.9" cy="12.9" r="1.1" fill="#7d7d7d"/></svg>
<svg class="a" style="left:939px;top:11.5px" width="12" height="13" viewBox="0 0 12 12.5"><path d="M4.89 1.79 L5.03 0.13 L6.97 0.13 L7.11 1.79 L8.30 2.27 L9.31 3.05 L10.82 2.35 L11.79 4.03 L10.42 4.98 L10.60 6.25 L10.42 7.52 L11.79 8.47 L10.82 10.15 L9.31 9.45 L8.30 10.23 L7.11 10.71 L6.97 12.37 L5.03 12.37 L4.89 10.71 L3.70 10.23 L2.69 9.45 L1.18 10.15 L0.21 8.47 L1.58 7.52 L1.40 6.25 L1.58 4.98 L0.21 4.03 L1.18 2.35 L2.69 3.05 L3.70 2.27Z" fill="#7d7d7d"/><circle cx="6" cy="6.25" r="2.9" fill="#fff"/><path d="M6 4.5 L6 7" stroke="#7d7d7d" stroke-width="1"/></svg>
<svg class="a" style="left:960px;top:10px" width="14" height="15" viewBox="0 0 14 15"><path d="M7 0.8 C4.2 0.8 3 3 3 5.5 L3 9.5 C3 10.5 2 11.2 0.6 11.8 L0.6 12.6 L13.4 12.6 L13.4 11.8 C12 11.2 11 10.5 11 9.5 L11 5.5 C11 3 9.8 0.8 7 0.8 Z" fill="#7d7d7d"/><path d="M5.8 13 L8.2 13 L7 14.2Z" fill="#7d7d7d"/></svg>
<svg class="a" style="left:985px;top:4px" width="24" height="24" viewBox="0 0 24 24">
<circle cx="12" cy="11.8" r="11.4" fill="#eef2f7" stroke="#a7a7a7" stroke-width="0.8"/>
<path d="M4 8 C4 4.5 7 3 12 3 C17 3 20 4.5 20 8 L20.5 15 C20.5 19.5 17 22 12 22 C7 22 3.5 19.5 3.5 15 Z" fill="#a9c1dc"/>
<circle cx="6.8" cy="6" r="1.6" fill="#5d80a6"/><circle cx="17.5" cy="6" r="1.6" fill="#5d80a6"/>
<ellipse cx="12.3" cy="13.2" rx="6.3" ry="5.6" fill="#5b7ea4"/>
<ellipse cx="12.3" cy="14.6" rx="5.4" ry="4.3" fill="#fff"/>
<circle cx="9.6" cy="15.2" r=".7" fill="#6b7f96"/><circle cx="15" cy="15.2" r=".7" fill="#6b7f96"/>
<circle cx="11.5" cy="21.6" r="1.3" fill="#3f5f86"/>
</svg>

<!-- nav row -->
<svg class="a" style="left:17px;top:40px" width="16" height="16" viewBox="0 0 16 16"><g fill="#706e6b"><circle cx="2" cy="2" r="1.5"/><circle cx="7.8" cy="2" r="1.5"/><circle cx="13.6" cy="2" r="1.5"/><circle cx="2" cy="7.6" r="1.5"/><circle cx="7.8" cy="7.6" r="1.5"/><circle cx="13.6" cy="7.6" r="1.5"/><circle cx="2" cy="13.1" r="1.5"/><circle cx="7.8" cy="13.1" r="1.5"/><circle cx="13.6" cy="13.1" r="1.5"/></g></svg>
<div class="a" style="left:47px;top:41px;font-size:12.4px;letter-spacing:-0.2px;color:#181818">SSS Manager</div>
<div class="a" style="left:476px;top:34.7px;width:108px;height:25.3px;background:#fdecf2;border-top:2px solid #e8508c"></div>
<div class="a nav" style="left:147px">Home</div>
<div class="a nav" style="left:190px">Accounts</div><div class="chev" style="left:238px;top:44px"></div>
<div class="a nav" style="left:263px">Contacts</div><div class="chev" style="left:309px;top:44px"></div>
<div class="a nav" style="left:335px">Opportunities</div><div class="chev" style="left:403px;top:44px"></div>
<div class="a nav" style="left:428px">Ships</div><div class="chev" style="left:460px;top:44px"></div>
<div class="a nav" style="left:485px">Ship Requisitions</div><div class="chev" style="left:567px;top:44px"></div>
<div class="a nav" style="left:592px">Ship Supplies</div><div class="chev" style="left:658px;top:44px"></div>
<div class="a nav" style="left:683px">Reports</div><div class="chev" style="left:725px;top:44px"></div>
<div class="a nav" style="left:750px">Dashboards</div><div class="chev" style="left:809px;top:44px"></div>
<svg class="a" style="left:1000px;top:43px" width="11" height="11" viewBox="0 0 11 11"><path d="M1 10 L1.5 7.5 L7.5 1.5 L9.5 3.5 L3.5 9.5 Z" fill="#706e6b"/></svg>

<!-- highlights card -->
<div class="card" style="left:8px;top:71px;width:1005px;height:94px;overflow:hidden">
  <div class="a" style="left:0;top:0;width:1005px;height:44px;background:#f3f3f3"></div>
</div>
<div class="a" style="left:20px;top:83px;width:23px;height:22px;background:#3bba7f;border-radius:3px"></div>
<svg class="a" style="left:20px;top:82px" width="23" height="23" viewBox="0 0 23 23"><path d="M5 13.2 L5.6 10.6 L13.2 8.2 L14.2 11.4 L6.6 14.2 Z" fill="#fff"/><path d="M14.8 7.6 L16.2 7 L17.4 11 L16 11.6 Z" fill="#fff"/><path d="M9.6 13.4 L7.2 19.2 M10.4 13.4 L12.6 19.2" stroke="#fff" stroke-width="1.5" stroke-linecap="round"/></svg>
<div class="a" style="left:51px;top:82px;font-size:9.2px;color:#3e3e3c">Ship Requisition</div>
<div class="a" style="left:51px;top:91px;font-size:12.8px;font-weight:bold;color:#181818">Lincoln - November 2020</div>
<div class="a" style="left:915px;top:84.5px;width:87px;height:21px;border:1px solid #e4e3e1;border-radius:3px;background:#fff"></div>
<div class="a" style="left:954px;top:85px;width:1px;height:20px;background:#e4e3e1"></div>
<div class="a" style="left:927px;top:89px;font-size:9.6px;color:#1f5a97">Edit</div>
<div class="a" style="left:965px;top:89px;font-size:9.6px;color:#1f5a97">Clone</div>

<div class="a lbl" style="left:20px;top:127px">Ship</div>
<div class="a val" style="left:20px;top:138px;color:#1a6bb3">Lincoln</div>
<div class="a" style="left:20px;top:151px;width:33px;height:1px;background:repeating-linear-gradient(to right,#7f9cc4 0 2px,transparent 2px 3px)"></div>
<div class="a lbl" style="left:97px;top:127px">Departure Date</div>
<div class="a val" style="left:97px;top:138px"><span class="dt">11/16/2020, 4:00 PM</span></div>
<div class="a lbl" style="left:242px;top:127px">Arrival Date</div>
<div class="a val" style="left:242px;top:138px"><span class="dt">11/20/2020, 1:30 PM</span></div>
<div class="a lbl" style="left:388px;top:127px">Booking Deadline</div>
<div class="a val" style="left:388px;top:138px"><span class="dt">11/6/2020</span></div>

<!-- path card -->
<div class="card" style="left:8px;top:174px;width:1005px;height:39px"></div>
<div class="a" style="left:20px;top:182px;width:22px;height:23px;border:1px solid #e0dfdd;border-radius:3px;background:#fff"></div>
<svg class="a" style="left:28px;top:189px" width="7" height="11" viewBox="0 0 7 11"><path d="M1 1 L5.4 5.2 L1 9.6" fill="none" stroke="#6f6f6f" stroke-width="1.2"/></svg>
<svg class="a" style="left:50px;top:182px" width="792" height="23" viewBox="0 0 792 23">
<path d="M11.5 0 L130 0 L136 11.5 L130 23 L11.5 23 A11.5 11.5 0 0 1 11.5 0Z" fill="#005fb2"/>
<path d="M132 0 L262 0 L268 11.5 L262 23 L132 23 L138 11.5Z" fill="#ecebea"/>
<path d="M264 0 L393 0 L399 11.5 L393 23 L264 23 L270 11.5Z" fill="#ecebea"/>
<path d="M395 0 L525 0 L531 11.5 L525 23 L395 23 L401 11.5Z" fill="#ecebea"/>
<path d="M527 0 L656 0 L662 11.5 L656 23 L527 23 L533 11.5Z" fill="#ecebea"/>
<path d="M658 0 L780 0 A11.5 11.5 0 0 1 780 23 L658 23 L664 11.5Z" fill="#ecebea"/>
</svg>
<div class="a" style="left:102px;top:189px;font-size:8.8px;color:#fff;font-weight:bold">Planning</div>
<div class="a" style="left:233px;top:188px;font-size:9.8px;color:#181818">Booking</div>
<div class="a" style="left:364px;top:188px;font-size:9.8px;color:#181818">On Time</div>
<div class="a" style="left:495px;top:188px;font-size:9.8px;color:#181818">Delayed</div>
<div class="a" style="left:624px;top:188px;font-size:9.8px;color:#181818">Departed</div>
<div class="a" style="left:750px;top:188px;font-size:9.8px;color:#181818">Completed</div>
<div class="a" style="left:858px;top:182.5px;width:144px;height:22px;background:#045496;border-radius:3px"></div>
<svg class="a" style="left:870px;top:189px" width="10" height="9" viewBox="0 0 10 9"><path d="M1 4.5 L3.8 7.5 L9 1.5" stroke="#fff" stroke-width="1.4" fill="none"/></svg>
<div class="a" style="left:886px;top:188px;font-size:9.2px;color:#fff">Mark Status as Complete</div>

<!-- details card -->
<div class="card" style="left:8px;top:222px;width:670.5px;height:170.5px"></div>
<div class="a" style="left:29px;top:239px;font-size:11.2px;font-weight:bold;color:#181818">Details</div>
<div class="a" style="left:98px;top:239px;font-size:11.2px;color:#3e3e3c">Supplies</div>
<div class="uline" style="left:20px;top:258px;width:647px"></div>
<div class="a" style="left:20px;top:256.5px;width:54px;height:2.2px;background:#1b6fc0"></div>
<div class="a" style="left:20px;top:267px;width:647px;height:28px;background:#f3f3f3;border-radius:3px"></div>
<div class="a" style="left:26px;top:274px;font-size:11.8px;color:#181818">Journey Information</div>

<div class="a lbl" style="left:31px;top:305px">Departure Date</div>
<div class="a val" style="left:31px;top:319px"><span class="dt">11/16/2020, 4:00 PM</span></div>
<div class="uline" style="left:29px;top:333px;width:306px"></div>
<div class="a lbl" style="left:31px;top:338px">Destination</div>
<div class="a val" style="left:31px;top:352.5px">Saturn</div>
<div class="uline" style="left:29px;top:366px;width:306px"></div>
<div class="a lbl" style="left:355px;top:305px">Arrival Date</div>
<div class="a val" style="left:355px;top:319px"><span class="dt">11/20/2020, 1:30 PM</span></div>
<div class="uline" style="left:352px;top:333px;width:306px"></div>

<!-- ship details card -->
<div class="card" style="left:687px;top:222px;width:326px;height:148px"></div>
<div class="a" style="left:699px;top:232px;width:17px;height:16px;background:#4e7f82;border-radius:3px"></div><svg class="a" style="left:699px;top:232px" width="17" height="16" viewBox="0 0 17 16"><path d="M8.3 3 L11.2 7.3 L5.4 7.3 Z" fill="#fff"/><path d="M3.8 8.4 L12.8 8.4 C12.8 11 11 13.4 8.3 13.6 C5.6 13.4 3.8 11 3.8 8.4 Z" fill="#fff"/><circle cx="6.9" cy="9.7" r=".6" fill="#4e7f82"/><circle cx="9.7" cy="9.7" r=".6" fill="#4e7f82"/></svg>
<div class="a" style="left:724px;top:231px;font-size:11.2px;font-weight:bold;color:#181818">Ship Details</div>
<div class="a" style="left:988.5px;top:231.3px;width:13.5px;height:13.2px;border:1px solid #dedede;border-radius:2.5px;background:#fff"></div>
<svg class="a" style="left:992px;top:236.2px" width="7" height="5"><path d="M0 0 L7 0 L3.5 4.5Z" fill="#6a6a6a"/></svg>
<div class="a lbl" style="left:702px;top:260.7px">Ship Name</div>
<div class="a val" style="left:702px;top:275px">Lincoln</div>
<div class="uline" style="left:699px;top:289px;width:303px"></div>
<div class="a lbl" style="left:702px;top:293.8px">Min. Required Crew</div>
<div class="a val" style="left:702px;top:308px">20</div>
<div class="uline" style="left:699px;top:323px;width:303px"></div>
<div class="a lbl" style="left:702px;top:327px">Max Client Capacity</div>
<div class="a val" style="left:702px;top:341px">2,000</div>
<div class="uline" style="left:699px;top:356px;width:303px"></div>

<!-- activity card -->
<div class="card" style="left:687px;top:380px;width:326px;height:210px"></div>
<div class="a" style="left:699px;top:391px;width:303px;height:85px;border:1px solid #dddbda;border-radius:3px;background:#fff;overflow:hidden">
  <div class="a" style="left:63px;top:0;width:240px;height:38px;background:#f3f3f3;border-bottom:1px solid #dddbda;border-left:1px solid #dddbda"></div>
</div>
<div class="a" style="left:707px;top:404.5px;font-size:10px;color:#1f5d9e">New Event</div>
<div class="a" style="left:774px;top:404.5px;font-size:10px;color:#3e3e3c">New Task</div>
<div class="a" style="left:837px;top:404.5px;font-size:10px;color:#3e3e3c">Log a Call</div>
<div class="a" style="left:910px;top:404.5px;font-size:10px;color:#3e3e3c">Email</div>
<div class="a" style="left:711px;top:441px;width:230px;height:23px;border:1px solid #dddbda;border-radius:3px;background:#fff"></div>
<div class="a" style="left:790px;top:447px;font-size:9.6px;color:#706e6b">Set up an event...</div>
<div class="a" style="left:949px;top:441px;width:41px;height:23px;background:#045496;border-radius:3px"></div>
<div class="a" style="left:961px;top:447px;font-size:9.6px;color:#fff;-webkit-text-stroke:0.3px #fff">Add</div>
<div class="a" style="left:809px;top:487.8px;font-size:9.45px;color:#181818">Filters: All time <span style="font-size:7px;letter-spacing:0.9px;vertical-align:1px">•</span> All activities <span style="font-size:7px;letter-spacing:0.9px;vertical-align:1px">•</span> All types</div>
<div class="a" style="left:980px;top:481px;width:22px;height:22px;border:1px solid #e3e2e0;border-radius:3px;background:#fff"></div>
<svg class="a" style="left:986.5px;top:488.3px" width="9" height="9" viewBox="0 0 9 9"><path d="M0 0 L9 0 L9 0.8 L5.3 4.6 L5.3 8.4 L3.7 8.4 L3.7 4.6 L0 0.8Z" fill="#3a3a3a"/></svg>
<div class="a" style="left:874px;top:510.3px;font-size:9.36px;color:#1f5d9e">Refresh <span style="font-size:7px;letter-spacing:0.9px;vertical-align:1px"><span style="color:#181818">•</span></span> Expand All <span style="font-size:7px;letter-spacing:0.9px;vertical-align:1px"><span style="color:#181818">•</span></span> View All</div>
<div class="a" style="left:699px;top:533px;width:303px;height:22px;background:#f3f3f3;border-radius:3px"></div>
<div class="chev" style="left:708px;top:540px;border-color:#181818"></div>
<div class="a" style="left:721px;top:539px;font-size:9.05px;font-weight:bold;color:#181818">Upcoming &amp; Overdue</div>
<div class="a" style="left:821px;top:563px;font-size:9.2px;color:#181818">No next steps.</div>
<div class="a" style="left:740.5px;top:575px;font-size:9.4px;color:#181818">To get things moving, add a task or set up a meeting.</div>

<svg class="a" style="left:322px;top:318px" width="10" height="10" viewBox="0 0 10 10"><path d="M0.8 9.2 L1.4 6.8 L7.2 1 L9 2.8 L3.2 8.6 Z" fill="#d6d6d6"/></svg><svg class="a" style="left:322px;top:351px" width="10" height="10" viewBox="0 0 10 10"><path d="M0.8 9.2 L1.4 6.8 L7.2 1 L9 2.8 L3.2 8.6 Z" fill="#d6d6d6"/></svg><svg class="a" style="left:645px;top:318px" width="10" height="10" viewBox="0 0 10 10"><path d="M0.8 9.2 L1.4 6.8 L7.2 1 L9 2.8 L3.2 8.6 Z" fill="#d6d6d6"/></svg><svg class="a" style="left:989px;top:275px" width="10" height="10" viewBox="0 0 10 10"><path d="M0.8 9.2 L1.4 6.8 L7.2 1 L9 2.8 L3.2 8.6 Z" fill="#d6d6d6"/></svg><svg class="a" style="left:989px;top:308px" width="10" height="10" viewBox="0 0 10 10"><path d="M0.8 9.2 L1.4 6.8 L7.2 1 L9 2.8 L3.2 8.6 Z" fill="#d6d6d6"/></svg><svg class="a" style="left:989px;top:341px" width="10" height="10" viewBox="0 0 10 10"><path d="M0.8 9.2 L1.4 6.8 L7.2 1 L9 2.8 L3.2 8.6 Z" fill="#d6d6d6"/></svg>
<div class="a" style="left:1022px;top:0;width:1px;height:583px;background:#3a3a3a"></div>
<!-- cursor -->
<svg class="a" style="left:690px;top:352px" width="8" height="12" viewBox="0 0 8 12"><path d="M0.5 0.5 L0.5 10 L2.8 7.8 L4.5 11.5 L6 10.8 L4.4 7.2 L7.5 7.2Z" fill="#111" stroke="#fff" stroke-width=".6"/></svg>
</body></html>
